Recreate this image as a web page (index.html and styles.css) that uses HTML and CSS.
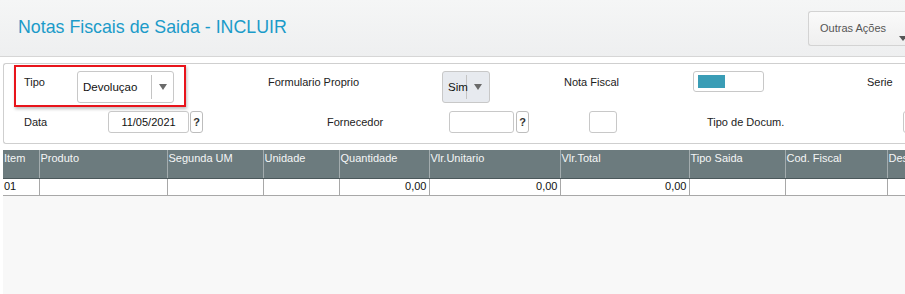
FILE: index.html
```html
<!DOCTYPE html>
<html lang="pt">
<head>
<meta charset="utf-8">
<title>Notas Fiscais de Saida - INCLUIR</title>
<link rel="stylesheet" href="styles.css">
</head>
<body>
<header class="topbar">
  <h1 class="title">Notas Fiscais de Saida - INCLUIR</h1>
  <button class="actions">Outras Ações<span class="caret"></span></button>
</header>

<section class="panel">
  <div class="row row1">
    <div class="focus">
      <span class="lbl lbl-tipo">Tipo</span>
      <div class="combo combo-tipo"><span class="combo-val">Devoluçao</span><span class="combo-btn"><i class="tri"></i></span></div>
    </div>
    <span class="lbl lbl-form">Formulario Proprio</span>
    <div class="combo combo-sim"><span class="combo-val">Sim</span><span class="combo-btn"><i class="tri"></i></span></div>
    <span class="lbl lbl-nf">Nota Fiscal</span>
    <div class="field field-nf"><span class="fill"></span></div>
    <span class="lbl lbl-serie">Serie</span>
  </div>
  <div class="row row2">
    <span class="lbl2 lbl-data">Data</span>
    <div class="field field-data">11/05/2021</div>
    <button class="help help-data">?</button>
    <span class="lbl2 lbl-forn">Fornecedor</span>
    <div class="field field-forn"></div>
    <button class="help help-forn">?</button>
    <div class="field field-small"></div>
    <span class="lbl2 lbl-doc">Tipo de Docum.</span>
    <div class="field field-last"></div>
  </div>
</section>

<section class="gridarea">
  <table class="grid">
    <colgroup>
      <col class="c-item"><col class="c-prod"><col class="c-seg"><col class="c-un"><col class="c-qt"><col class="c-vu"><col class="c-vt"><col class="c-ts"><col class="c-cf"><col class="c-ds">
    </colgroup>
    <thead>
      <tr>
        <th>Item</th><th>Produto</th><th>Segunda UM</th><th>Unidade</th><th>Quantidade</th><th>Vlr.Unitario</th><th>Vlr.Total</th><th>Tipo Saida</th><th>Cod. Fiscal</th><th>Descricao</th>
      </tr>
    </thead>
    <tbody>
      <tr>
        <td>01</td><td></td><td></td><td></td><td class="num">0,00</td><td class="num">0,00</td><td class="num">0,00</td><td></td><td></td><td></td>
      </tr>
    </tbody>
  </table>
</section>
</body>
</html>
```

FILE: styles.css
```css
* { box-sizing: border-box; }
html, body { margin: 0; padding: 0; }
body {
  width: 905px;
  height: 294px;
  overflow: hidden;
  background: #ffffff;
  font-family: "Liberation Sans", Arial, sans-serif;
  font-size: 11px;
  color: #222;
  display: flex;
  flex-direction: column;
}

/* Header */
.topbar {
  height: 57px;
  flex: none;
  display: flex;
  align-items: flex-start;
  justify-content: space-between;
  background: linear-gradient(#f5f6f6, #eeeff0);
  border-bottom: 1px solid #d6d6d6;
}
.title {
  margin: 16px 0 0 18px;
  font-size: 17.8px;
  font-weight: normal;
  line-height: 22px;
  color: #1b9bc9;
}
.actions {
  margin: 11px 0 0 0;
  width: 97px;
  height: 35px;
  flex: none;
  border: 1px solid #d3d3d3;
  border-right: none;
  border-radius: 3px 0 0 3px;
  background: linear-gradient(#fafafa, #efefef);
  font-family: "Liberation Sans", Arial, sans-serif;
  font-size: 11px;
  color: #555;
  text-align: left;
  padding: 0 0 2px 11px;
  position: relative;
}
.caret {
  position: absolute;
  left: 90px;
  top: 24px;
  width: 0; height: 0;
  border-left: 4px solid transparent;
  border-right: 4px solid transparent;
  border-top: 5px solid #555;
}

/* Form panel */
.panel {
  flex: none;
  margin: 6px 0 0 3px;
  border: 1px solid #cfcfcf;
  border-right: none;
  border-radius: 3px 0 0 3px;
  background: #fff;
  padding: 0 0 10px 0;
  overflow: hidden;
}
.row { display: flex; align-items: flex-start; white-space: nowrap; }
.row1 { height: 44px; }
.row2 { height: 22px; margin-top: 3px; align-items: center; }

.lbl { line-height: 13px; margin-top: 12px; flex: none; color: #222; }
.lbl2 { line-height: 13px; flex: none; color: #222; }

.focus {
  flex: none;
  margin: 1px 0 0 10px;
  width: 172px;
  height: 42px;
  border: 2px solid #e8141b;
  box-shadow: 1px 2px 3px rgba(0,0,0,0.25);
  display: flex;
  align-items: flex-start;
  padding-left: 8px;
}
.lbl-tipo { width: 53px; margin-top: 9px; }

.combo {
  flex: none;
  display: flex;
  height: 32px;
  border: 1px solid #c8c8c8;
  border-radius: 3px;
  background: #fff;
  font-size: 11.5px;
  color: #111;
}
.combo-val { display: flex; align-items: center; padding-left: 5px; border-right: 1px solid #c4c4c4; margin: 3px 0; }
.combo-btn { display: flex; align-items: center; justify-content: center; flex: 1; }
.tri {
  width: 0; height: 0;
  border-left: 4px solid transparent;
  border-right: 4px solid transparent;
  border-top: 6px solid #6a6a6a;
}
.combo-tipo { width: 97px; margin-top: 4px; }
.combo-tipo .combo-val { width: 74px; }
.combo-sim { width: 48px; margin-top: 7px; background: #e7eaef; }
.combo-sim .combo-val { width: 24px; padding-left: 5px; }

.lbl-form { margin-left: 82px; width: 174px; }
.lbl-nf { margin-left: 74px; width: 129px; }
.lbl-serie { margin-left: 103px; }

.field {
  flex: none;
  height: 22px;
  border: 1px solid #c8c8c8;
  border-radius: 3px;
  background: #fff;
}
.field-nf { width: 71px; height: 21px; margin-top: 7px; padding: 3px 0 0 4px; }
.fill { display: block; width: 27px; height: 13px; background: #3a9db6; }

.lbl-data { margin-left: 20px; width: 84px; }
.field-data { width: 81px; font-size: 11px; line-height: 20px; text-align: center; color: #111; }
.help {
  flex: none;
  width: 13px;
  height: 22px;
  padding: 0;
  border: 1px solid #bdbdbd;
  border-radius: 3px;
  background: #fff;
  font-family: "Liberation Sans", Arial, sans-serif;
  font-size: 11px;
  font-weight: bold;
  color: #333;
}
.help-data { margin-left: 1px; }
.lbl-forn { margin-left: 124px; width: 122px; }
.field-forn { width: 65px; }
.help-forn { margin-left: 2px; }
.field-small { margin-left: 60px; width: 28px; }
.lbl-doc { margin-left: 90px; width: 196px; }
.field-last { width: 40px; }

/* Grid */
.gridarea {
  flex: 1;
  margin: 6px 0 0 3px;
  background: #f8f8f8;
  overflow: hidden;
}
.grid {
  border-collapse: collapse;
  table-layout: fixed;
  width: 1000px;
  font-size: 11px;
}
.c-item { width: 36px; }
.c-prod { width: 128px; }
.c-seg { width: 96px; }
.c-un { width: 76px; }
.c-qt { width: 90px; }
.c-vu { width: 131px; }
.c-vt { width: 129px; }
.c-ts { width: 96px; }
.c-cf { width: 102px; }
.c-ds { width: 116px; }

.grid th {
  height: 28px;
  background: #6c7b7e;
  color: #f4f6f6;
  font-weight: normal;
  text-align: left;
  vertical-align: top;
  padding: 2px 0 0 1px;
  line-height: 13px;
  border-left: 1px solid #a3acae;
  border-bottom: 1px solid #4b585b;
  white-space: nowrap;
  overflow: hidden;
}
.grid th:first-child { border-left: none; }
.grid td {
  height: 17px;
  background: #fff;
  color: #111;
  padding: 0 1px;
  line-height: 15px;
  border-left: 1px solid #a8a8a8;
  border-bottom: 1px solid #a8a8a8;
}
.grid td:first-child { border-left: none; }
.grid td.num { text-align: right; padding-right: 2px; }
```
